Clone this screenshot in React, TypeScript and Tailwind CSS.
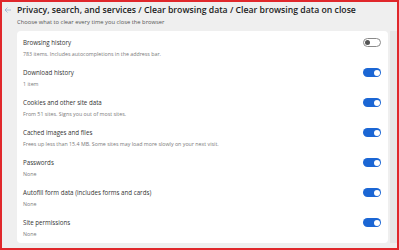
import React from "react";

const rows = [
  { title: "Browsing history", sub: "783 items. Includes autocompletions in the address bar.", on: false },
  { title: "Download history", sub: "1 item", on: true },
  { title: "Cookies and other site data", sub: "From 51 sites. Signs you out of most sites.", on: true },
  { title: "Cached images and files", sub: "Frees up less than 15.4 MB. Some sites may load more slowly on your next visit.", on: true },
  { title: "Passwords", sub: "None", on: true },
  { title: "Autofill form data (includes forms and cards)", sub: "None", on: true },
  { title: "Site permissions", sub: "None", on: true },
];

function Toggle({ on }: { on: boolean }) {
  if (on) {
    return (
      <div className="w-[18px] h-[9px] rounded-full bg-[#1b66d4] flex items-center justify-end pr-[1.5px] shrink-0">
        <div className="w-[6px] h-[6px] rounded-full bg-white" />
      </div>
    );
  }
  return (
    <div className="w-[18px] h-[9px] rounded-full bg-white border border-[#8a8a8a] flex items-center pl-[1px] shrink-0">
      <div className="w-[5px] h-[5px] rounded-full bg-[#555]" />
    </div>
  );
}

export default function App() {
  return (
    <div
      className="w-[399px] h-[250px] border-2 border-[#e0272b] bg-[#efefef] overflow-hidden flex flex-col"
      style={{ fontFamily: '"Open Sans", "Noto Sans", sans-serif' }}
    >
      {/* Header */}
      <div className="flex items-start pt-[1px]">
        <svg
          className="w-[8px] h-[8px] ml-[2px] mt-[3px] text-[#8aa0c8]"
          viewBox="0 0 16 16"
          fill="none"
          stroke="currentColor"
          strokeWidth={1.3}
        >
          <path d="M14 8H2M7 3L2 8l5 5" />
        </svg>
        <div className="ml-[5px]">
          <h1 className="text-[8.7px] leading-[14px] font-semibold text-[#1c1c1c] whitespace-nowrap scale-y-[1.12] origin-bottom">
            Privacy, search, and services / Clear browsing data / Clear browsing data on close
          </h1>
          <p className="text-[5.8px] leading-[9px] mt-[1px] text-[#555] whitespace-nowrap">
            Choose what to clear every time you close the browser
          </p>
        </div>
      </div>

      {/* Body */}
      <div className="flex mt-[4px] flex-1 min-h-0">
        <div className="ml-[15px] w-[373px] h-[212px] bg-white rounded-[4px] pt-[7px] pl-[6px] pr-[7px] flex flex-col gap-[10px]">
          {rows.map((r) => (
            <div key={r.title} className="flex items-start justify-between">
              <div>
                <div className="text-[6.2px] leading-[10px] text-[#333] whitespace-nowrap">{r.title}</div>
                <div className="text-[5.3px] leading-[8px] mt-[2px] text-[#7a7a7a] whitespace-nowrap">{r.sub}</div>
              </div>
              <Toggle on={r.on} />
            </div>
          ))}
        </div>
        <div className="ml-[2px] w-[7px] h-[212px] bg-[#e6e6e6]" />
      </div>
    </div>
  );
}
